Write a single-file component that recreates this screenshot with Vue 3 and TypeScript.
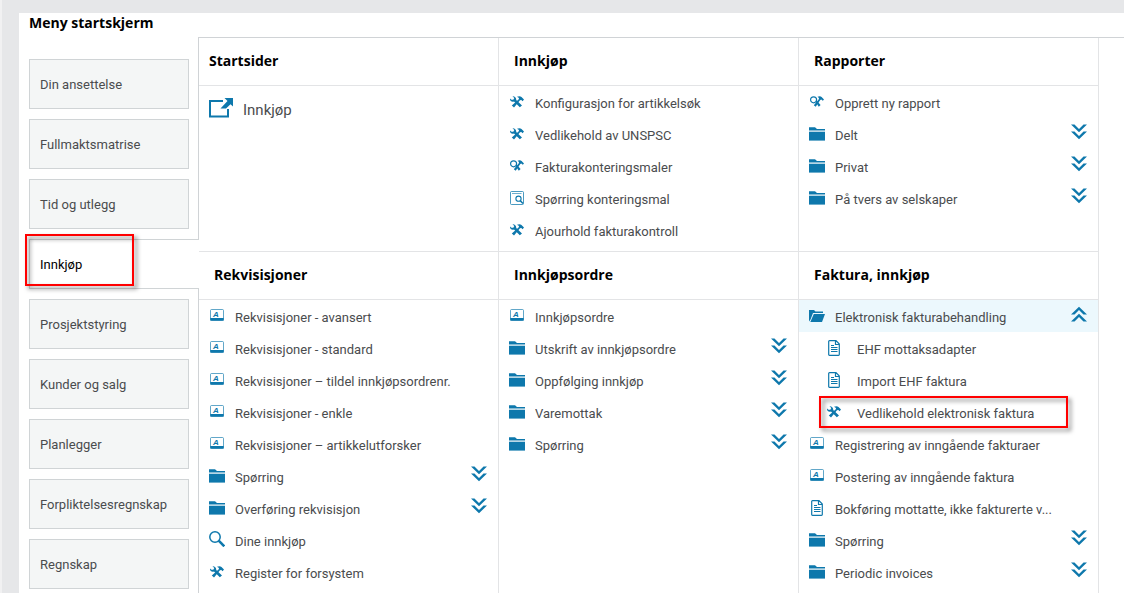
<script setup lang="ts">
import { ref } from 'vue'

type IconName = 'tools' | 'ringTools' | 'query' | 'card' | 'folder' | 'search' | 'doc'

interface MenuItem {
  label: string
  icon: IconName
  open?: boolean
  children?: MenuItem[]
  marked?: boolean
}

interface MenuSection {
  title: string
  start?: boolean
  items: MenuItem[]
}

const tabs: string[] = [
  'Din ansettelse',
  'Fullmaktsmatrise',
  'Tid og utlegg',
  'Innkjøp',
  'Prosjektstyring',
  'Kunder og salg',
  'Planlegger',
  'Forpliktelsesregnskap',
  'Regnskap',
]
const activeTab = ref('Innkjøp')

const item = (icon: IconName, label: string): MenuItem => ({ icon, label })

const sections = ref<MenuSection[]>([
  { title: 'Startsider', start: true, items: [] },
  {
    title: 'Innkjøp',
    items: [
      item('tools', 'Konfigurasjon for artikkelsøk'),
      item('tools', 'Vedlikehold av UNSPSC'),
      item('ringTools', 'Fakturakonteringsmaler'),
      item('query', 'Spørring konteringsmal'),
      item('tools', 'Ajourhold fakturakontroll'),
    ],
  },
  {
    title: 'Rapporter',
    items: [
      item('ringTools', 'Opprett ny rapport'),
      item('folder', 'Delt'),
      item('folder', 'Privat'),
      item('folder', 'På tvers av selskaper'),
    ],
  },
  {
    title: 'Rekvisisjoner',
    items: [
      item('card', 'Rekvisisjoner - avansert'),
      item('card', 'Rekvisisjoner - standard'),
      item('card', 'Rekvisisjoner – tildel innkjøpsordrenr.'),
      item('card', 'Rekvisisjoner - enkle'),
      item('card', 'Rekvisisjoner – artikkelutforsker'),
      item('folder', 'Spørring'),
      item('folder', 'Overføring rekvisisjon'),
      item('search', 'Dine innkjøp'),
      item('tools', 'Register for forsystem'),
    ],
  },
  {
    title: 'Innkjøpsordre',
    items: [
      item('card', 'Innkjøpsordre'),
      item('folder', 'Utskrift av innkjøpsordre'),
      item('folder', 'Oppfølging innkjøp'),
      item('folder', 'Varemottak'),
      item('folder', 'Spørring'),
    ],
  },
  {
    title: 'Faktura, innkjøp',
    items: [
      {
        icon: 'folder',
        label: 'Elektronisk fakturabehandling',
        open: true,
        children: [
          item('doc', 'EHF mottaksadapter'),
          item('doc', 'Import EHF faktura'),
          { icon: 'tools', label: 'Vedlikehold elektronisk faktura', marked: true },
        ],
      },
      item('card', 'Registrering av inngående fakturaer'),
      item('card', 'Postering av inngående faktura'),
      item('doc', 'Bokføring mottatte, ikke fakturerte v...'),
      item('folder', 'Spørring'),
      item('folder', 'Periodic invoices'),
    ],
  },
])

interface Row extends MenuItem {
  child: boolean
  source: MenuItem
}

function rowsOf(section: MenuSection): Row[] {
  return section.items.flatMap((entry) => [
    { ...entry, child: false, source: entry },
    ...(entry.open ? (entry.children ?? []).map((c) => ({ ...c, child: true, source: c })) : []),
  ])
}
</script>

<template>
  <div class="page">
    <main class="sheet">
      <h1 class="title">Meny startskjerm</h1>
      <div class="body">
        <nav class="tabs" aria-label="Meny">
          <button
            v-for="tab in tabs"
            :key="tab"
            type="button"
            class="tab"
            :class="{ active: tab === activeTab }"
            @click="activeTab = tab"
          >
            {{ tab }}
            <span v-if="tab === 'Innkjøp'" class="marker tab-marker"></span>
          </button>
        </nav>

        <div class="panel">
          <section v-for="section in sections" :key="section.title" class="section">
            <h2 class="heading" :class="{ start: section.start }">{{ section.title }}</h2>

            <a v-if="section.start" href="#" class="start-link">
              <svg width="24" height="20" viewBox="0 0 24 20" aria-hidden="true">
                <path d="M14 3H1V18.500H19V11" fill="none" stroke="#0e78ac" stroke-width="2" />
                <path d="M15.500 0H24V8.500L21.500 6.300 17 10.500H11.500L18.500 3z" fill="#0e78ac" />
              </svg>
              <span>Innkjøp</span>
            </a>

            <ul v-else class="list">
              <li v-for="row in rowsOf(section)" :key="row.label">
                <component
                  :is="row.icon === 'folder' ? 'button' : 'a'"
                  :type="row.icon === 'folder' ? 'button' : undefined"
                  :href="row.icon === 'folder' ? undefined : '#'"
                  :aria-expanded="row.icon === 'folder' ? !!row.open : undefined"
                  class="row"
                  :class="{ child: row.child, open: row.open }"
                  @click.prevent="row.icon === 'folder' && (row.source.open = !row.source.open)"
                >
                  <span class="icon">
                    <svg v-if="row.icon === 'folder' && row.open" width="16" height="14" viewBox="0 0 16 14" aria-hidden="true">
                      <path d="M0 1H5L6.500 2.500H14V4H4L1.500 10.500 0 12.500z" />
                      <path d="M4.800 5H16L13 13H1.300z" />
                    </svg>
                    <svg v-else-if="row.icon === 'folder'" width="16" height="14" viewBox="0 0 16 14" aria-hidden="true">
                      <path d="M0 .3H6L8 2H16V3.400H0z" />
                      <path d="M0 4.700H16V13.600H0z" />
                    </svg>
                    <svg v-else-if="row.icon === 'tools'" width="14" height="12" viewBox="0 0 14 12" aria-hidden="true">
                      <path d="M2.500.3 4.300 2 3.300 3.700 1.500 3.800 0 2.500C-.2 5 1.500 6.300 4 5.600L9.800 11.300 12 9.500 6.200 4C6.500 2 4.800.1 2.500.3z" />
                      <path d="M7 .8C8.500-.1 10.500 0 11.500 1L14 3.600 12.600 5.200 11.300 4 10 4.300 4 11.500 1.800 9.600 8.800 3.200 9 2z" />
                    </svg>
                    <svg v-else-if="row.icon === 'ringTools'" width="14" height="12" viewBox="0 0 14 12" aria-hidden="true">
                      <circle cx="3.600" cy="3.800" r="3" fill="none" stroke="#0e78ac" stroke-width="1.200" />
                      <path d="M5.500 5.800 6.800 4.800 10.600 9 8.800 10.700z" />
                      <path d="M7.500 .8C9 0 10.800.1 11.600 1L14 3.600 12.800 4.800 11.300 3.600 10.300 4.100 5.700 10.700 3.800 9.200 8.800 3.200 9 2z" />
                    </svg>
                    <svg v-else-if="row.icon === 'query'" width="14" height="14" viewBox="0 0 14 14" aria-hidden="true">
                      <rect x=".5" y=".5" width="13" height="13" rx="1" fill="none" stroke="#0e78ac" stroke-opacity=".75" />
                      <path d="M2 2.500H11.500" stroke="#0e78ac" stroke-opacity=".6" />
                      <circle cx="8.500" cy="7.700" r="2.600" fill="none" stroke="#0e78ac" stroke-width="1.100" />
                      <path d="M10.300 9.700 13 12.500" stroke="#0e78ac" stroke-width="1.600" />
                    </svg>
                    <svg v-else-if="row.icon === 'card'" class="raised" width="14" height="12" viewBox="0 0 14 12" aria-hidden="true">
                      <rect x=".5" y=".5" width="13" height="11" rx="1" fill="#fff" stroke="#0e78ac" stroke-opacity=".65" />
                      <path d="M.3 9H13.700V11.600H.3z" />
                      <text x="3" y="8" class="card-letter">A</text>
                    </svg>
                    <svg v-else-if="row.icon === 'search'" class="raised" width="16" height="16" viewBox="0 0 16 16" aria-hidden="true">
                      <circle cx="6" cy="6" r="5.200" fill="none" stroke="#0e78ac" stroke-width="1.500" />
                      <path d="M9.700 9.700 15.300 15.300" fill="none" stroke="#0e78ac" stroke-width="2.600" />
                    </svg>
                    <svg v-else width="12" height="16" viewBox="0 0 12 16" aria-hidden="true">
                      <path d="M1.500.7H8L11.300 4V14.500Q11.300 15.300 10.500 15.300H1.500Q.7 15.300.7 14.500V1.500Q.7.7 1.500.7zM7.500.7V4.500H11.300" fill="none" stroke="#0e78ac" stroke-width="1.200" />
                      <path d="M3 5.500H6M3 7.500H9.500M3 9.500H9.500M3 11.500H9.500" stroke="#0e78ac" />
                    </svg>
                  </span>
                  <span class="label">{{ row.label }}</span>
                  <svg
                    v-if="row.icon === 'folder'"
                    class="chevrons"
                    :class="{ up: row.open }"
                    width="16"
                    height="16"
                    viewBox="0 0 16 16"
                    aria-hidden="true"
                  >
                    <path d="M0 .5H3.500L8 5 12.500.5H16L8 8.300z" />
                    <path d="M0 7.500H3.500L8 12 12.500 7.500H16L8 15.300z" />
                  </svg>
                  <span v-if="row.marked" class="marker row-marker"></span>
                </component>
              </li>
            </ul>
          </section>
        </div>
      </div>
    </main>
  </div>
</template>

<style>
body {
  margin: 0;
  background: #e6e7e9;
}
</style>

<style scoped>
.page {
  box-sizing: border-box;
  display: flex;
  min-height: 100vh;
  padding: 13px 0 0 17px;
  border-left: 2px solid #f1f1f2;
  font-family: Roboto, 'Liberation Sans', sans-serif;
  font-size: 13px;
  line-height: 16px;
  color: #4a4c4e;
}

.sheet {
  flex: 1;
  min-width: 0;
  display: flex;
  flex-direction: column;
  padding-left: 10px;
  background: #fff;
}

.title {
  margin: 0;
  height: 24px;
  font-family: 'Open Sans', Roboto, sans-serif;
  font-size: 14px;
  line-height: 20px;
  color: #000;
}

.body {
  flex: 1;
  display: flex;
}

.tabs {
  flex: none;
  box-sizing: border-box;
  width: 170px;
  display: flex;
  flex-direction: column;
  gap: 10px;
  padding: 22px 9px 4px 0;
  border-right: 1px solid #d0d3d6;
}

.tab {
  position: relative;
  box-sizing: border-box;
  height: 50px;
  padding: 2px 10px 0;
  border: 1px solid #d0d4d6;
  background: #f4f6f6;
  font: inherit;
  color: inherit;
  text-align: left;
  cursor: pointer;
}

.tab.active {
  margin-right: -10px;
  border-right: 0;
  background: #fff;
  color: #000;
}

.marker {
  position: absolute;
  box-sizing: border-box;
  border: 2px solid #f00;
  filter: drop-shadow(3px 3px 2px rgba(0, 0, 0, 0.5));
  pointer-events: none;
}

.tab-marker {
  inset: -6px auto 2px -5px;
  width: 109px;
}

.row-marker {
  inset: 0 30px 0 20px;
}

.panel {
  flex: 1;
  min-width: 0;
  display: grid;
  grid-template-columns: repeat(3, minmax(0, 300px));
  grid-template-rows: auto 1fr;
  border-top: 1px solid #d0d3d6;
}

.section {
  border-right: 1px solid #e3e4e6;
}

.section:nth-child(-n + 3) {
  padding-bottom: 5px;
  border-bottom: 1px solid #e3e4e6;
}

.heading {
  margin: 0;
  padding: 11px 15px 12px;
  border-bottom: 1px solid #e3e4e6;
  font-family: 'Open Sans', Roboto, sans-serif;
  font-size: 14px;
  line-height: 24px;
  color: #000;
}

.heading.start {
  padding-left: 10px;
}

.start-link {
  display: flex;
  align-items: center;
  gap: 10px;
  padding: 12px 10px;
  font-size: 15px;
  line-height: 24px;
  color: inherit;
  text-decoration: none;
}

.start-link svg {
  margin-bottom: 4px;
}

.list {
  margin: 0;
  padding: 0;
  list-style: none;
}

.row {
  position: relative;
  box-sizing: border-box;
  display: flex;
  align-items: center;
  width: 100%;
  height: 32px;
  padding: 0 11px 0 10px;
  border: 0;
  background: none;
  font: inherit;
  color: inherit;
  text-align: left;
  text-decoration: none;
  cursor: pointer;
}

.row.child {
  padding-left: 27px;
}

.row.open {
  background: #ecf8fd;
}

.icon {
  flex: none;
  display: flex;
  justify-content: center;
  width: 16px;
  margin-right: 10px;
  fill: #0e78ac;
}

.child .icon {
  margin-right: 15px;
}

.raised {
  margin-bottom: 2px;
}

.card-letter {
  font: italic bold 8px 'Liberation Sans', sans-serif;
}

.label {
  flex: 1;
  min-width: 0;
  padding-top: 4px;
  overflow: hidden;
  white-space: nowrap;
  text-overflow: ellipsis;
}

.chevrons {
  flex: none;
  margin-bottom: 4px;
  fill: #0e78ac;
}

.chevrons.up {
  transform: rotate(180deg);
}
</style>
